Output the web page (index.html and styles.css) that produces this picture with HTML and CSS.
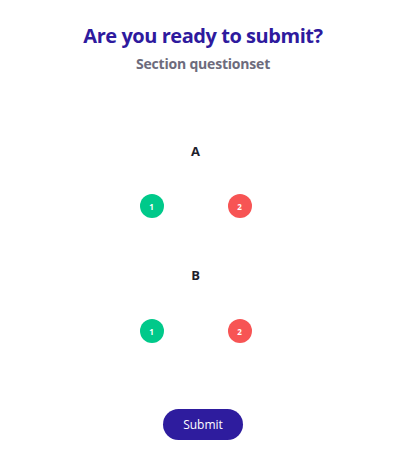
FILE: index.html
```html
<!DOCTYPE html>
<html>
<head>
<meta charset="utf-8">
<link rel="stylesheet" href="styles.css">
</head>
<body>
<div class="page">
  <h1 class="title">Are you ready to submit?</h1>
  <h2 class="subtitle">Section questionset</h2>
  <div class="section section-a">
    <div class="label">A</div>
    <div class="row">
      <span class="dot done">1</span>
      <span class="dot todo">2</span>
    </div>
  </div>
  <div class="section section-b">
    <div class="label">B</div>
    <div class="row">
      <span class="dot done">1</span>
      <span class="dot todo">2</span>
    </div>
  </div>
  <div class="actions">
    <button class="submit">Submit</button>
  </div>
</div>
</body>
</html>
```
FILE: styles.css
```css
html, body { margin: 0; padding: 0; background: #fff; }
body { font-family: "Open Sans", "Noto Sans", sans-serif; }
.page { display: flex; flex-direction: column; align-items: center; padding-top: 24px; }
.title { margin: 0; font-size: 20px; line-height: 24px; font-weight: 700; color: #2e1a9e; letter-spacing: -0.45px; padding-left: 5px; }
.subtitle { margin: 6px 0 0; font-size: 14px; line-height: 20px; font-weight: 700; color: #6d6b7c; letter-spacing: -0.2px; padding-left: 5px; }
.section { display: flex; flex-direction: column; align-items: center; padding-right: 10px; }
.section-a { margin-top: 68px; }
.section-b { margin-top: 48px; }
.label { font-size: 13px; line-height: 18px; font-weight: 700; color: #1e1e2c; }
.row { display: flex; gap: 64px; margin-top: 34px; }
.section-b .row { margin-top: 35px; }
.dot { width: 24px; height: 24px; border-radius: 50%; display: flex; align-items: center; justify-content: center; color: #fff; font-size: 8px; font-weight: 700; }
.done { background: #00c98a; }
.todo { background: #f75454; }
.actions { margin-top: 66px; padding-left: 5px; }
.submit { width: 80px; height: 31px; border: none; border-radius: 16px; background: #2e1c9e; color: #fff; font-family: "Open Sans", "Noto Sans", sans-serif; font-size: 12px; padding: 0; }
```
